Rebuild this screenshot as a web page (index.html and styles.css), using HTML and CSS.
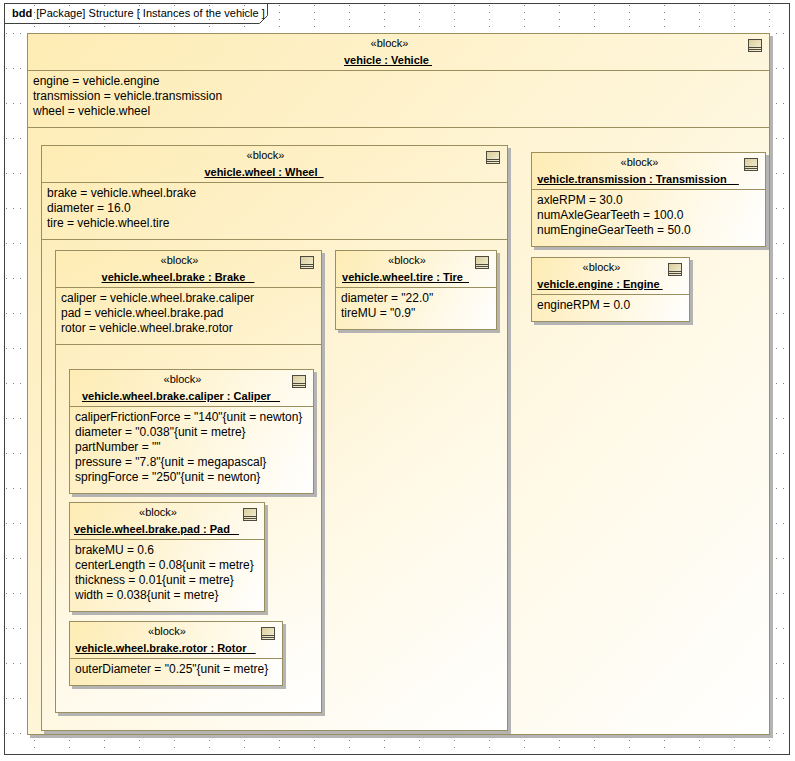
FILE: index.html
```html
<!DOCTYPE html>
<html lang="en">
<head>
<meta charset="utf-8">
<title>bdd Structure</title>
<link rel="stylesheet" href="styles.css">
</head>
<body>
<main class="canvas">
  <svg class="grid" width="795" height="761" aria-hidden="true">
    <defs>
      <pattern id="dots" width="35" height="35" patternUnits="userSpaceOnUse" x="6" y="5">
        <rect x="0" y="28" width="1" height="1"/><rect x="7" y="28" width="1" height="1"/><rect x="14" y="28" width="1" height="1"/><rect x="21" y="28" width="1" height="1"/><rect x="28" y="0" width="1" height="1"/><rect x="28" y="7" width="1" height="1"/><rect x="28" y="14" width="1" height="1"/><rect x="28" y="21" width="1" height="1"/><rect x="28" y="28" width="1" height="1"/>
      </pattern>
    </defs>
    <rect class="grid-fill" x="5" y="4" width="784" height="750"/>
  </svg>
  <div class="frame"></div>
  <svg class="tab-line" width="270" height="24" aria-hidden="true"><path d="M4.5 23.5H259.5L267.5 15.5V3"/></svg>
  <div class="tab"><b>bdd</b><span class="tab-name">[Package] Structure [ Instances of the vehicle ]</span></div>

  <section class="block vehicle">
    <header class="head"><div class="stereo">«block»</div><div class="name">vehicle : Vehicle&nbsp;</div><svg class="icon" width="14" height="13"><use href="#blk"/></svg></header>
    <div class="attrs tall"><div>engine = vehicle.engine</div><div>transmission = vehicle.transmission</div><div>wheel = vehicle.wheel</div></div>

    <section class="block wheel">
      <header class="head"><div class="stereo">«block»</div><div class="name">vehicle.wheel : Wheel&nbsp;&nbsp;</div><svg class="icon" width="14" height="13"><use href="#blk"/></svg></header>
      <div class="attrs tall"><div>brake = vehicle.wheel.brake</div><div>diameter = 16.0</div><div>tire = vehicle.wheel.tire</div></div>

      <section class="block brake">
        <header class="head"><div class="stereo">«block»</div><div class="name">vehicle.wheel.brake : Brake&nbsp;&nbsp;&nbsp;</div><svg class="icon" width="14" height="13"><use href="#blk"/></svg></header>
        <div class="attrs tall"><div>caliper = vehicle.wheel.brake.caliper</div><div>pad = vehicle.wheel.brake.pad</div><div>rotor = vehicle.wheel.brake.rotor</div></div>

        <section class="block caliper">
          <header class="head"><div class="stereo">«block»</div><div class="name">vehicle.wheel.brake.caliper : Caliper&nbsp;&nbsp;&nbsp;</div><svg class="icon" width="14" height="13"><use href="#blk"/></svg></header>
          <div class="attrs"><div>caliperFrictionForce = "140"{unit = newton}</div><div>diameter = "0.038"{unit = metre}</div><div>partNumber = ""</div><div>pressure = "7.8"{unit = megapascal}</div><div>springForce = "250"{unit = newton}</div></div>
        </section>

        <section class="block pad">
          <header class="head"><div class="stereo">«block»</div><div class="name">vehicle.wheel.brake.pad : Pad&nbsp;&nbsp;&nbsp;</div><svg class="icon" width="14" height="13"><use href="#blk"/></svg></header>
          <div class="attrs"><div>brakeMU = 0.6</div><div>centerLength = 0.08{unit = metre}</div><div>thickness = 0.01{unit = metre}</div><div>width = 0.038{unit = metre}</div></div>
        </section>

        <section class="block rotor">
          <header class="head"><div class="stereo">«block»</div><div class="name">vehicle.wheel.brake.rotor : Rotor&nbsp;&nbsp;&nbsp;</div><svg class="icon" width="14" height="13"><use href="#blk"/></svg></header>
          <div class="attrs"><div>outerDiameter = "0.25"{unit = metre}</div></div>
        </section>
      </section>

      <section class="block tire">
        <header class="head"><div class="stereo">«block»</div><div class="name">vehicle.wheel.tire : Tire&nbsp;&nbsp;</div><svg class="icon" width="14" height="13"><use href="#blk"/></svg></header>
        <div class="attrs"><div>diameter = "22.0"</div><div>tireMU = "0.9"</div></div>
      </section>
    </section>

    <section class="block transmission">
      <header class="head"><div class="stereo">«block»</div><div class="name">vehicle.transmission : Transmission&nbsp;&nbsp;&nbsp;&nbsp;</div><svg class="icon" width="14" height="13"><use href="#blk"/></svg></header>
      <div class="attrs"><div>axleRPM = 30.0</div><div>numAxleGearTeeth = 100.0</div><div>numEngineGearTeeth = 50.0</div></div>
    </section>

    <section class="block engine">
      <header class="head"><div class="stereo">«block»</div><div class="name">vehicle.engine : Engine&nbsp;</div><svg class="icon" width="14" height="13"><use href="#blk"/></svg></header>
      <div class="attrs"><div>engineRPM = 0.0</div></div>
    </section>
  </section>

  <svg class="defs" width="0" height="0" aria-hidden="true">
    <defs>
      <linearGradient id="ig" x1="0" y1="0" x2="1" y2="1"><stop offset="0" stop-color="#d9cc97"/><stop offset="1" stop-color="#f6f1dc"/></linearGradient>
      <g id="blk"><rect x="0.5" y="0.5" width="13" height="12" fill="url(#ig)" stroke="#4d4a3f"/><path d="M1 8.5H13M1 10.5H13" stroke="#4d4a3f" fill="none"/></g>
    </defs>
  </svg>
</main>
</body>
</html>
```
FILE: styles.css
```css
* { box-sizing: border-box; }
html, body { margin: 0; padding: 0; background: #fff; }
body { font-family: "Liberation Sans", Arial, sans-serif; font-size: 12px; color: #000; }

.canvas { position: relative; width: 795px; height: 761px; overflow: hidden; }
.grid { position: absolute; left: 0; top: 0; }
.grid-fill { fill: url(#dots); }
#dots rect { fill: #7f7f7f; }
.frame { position: absolute; left: 4px; top: 3px; width: 786px; height: 752px; border: 1px solid #404040; }
.tab-line { position: absolute; left: 0; top: 0; fill: none; stroke: #404040; }
.tab { position: absolute; left: 12px; top: 6px; line-height: 15px; white-space: pre; display: flex; gap: 4px; }
.tab b { font-weight: 700; font-size: 11px; }
.tab-name { font-size: 11px; letter-spacing: 0.04px; }
.defs { position: absolute; }

.block {
  position: absolute;
  border: 1px solid #9c8f5f;
  box-shadow: 3px 3px 0 #b4b4b4;
  background: linear-gradient(var(--angle), #feecb4 0%, #ffffff 100%);
}
.head {
  position: relative;
  height: 37px;
  padding: 2px 18px 0 0;
  border-bottom: 1px solid #9c8f5f;
  text-align: center;
  white-space: nowrap;
}
.stereo { font-size: 11px; line-height: 15px; }
.name { font-weight: 700; font-size: 11px; line-height: 19px; padding-right: 3px; text-decoration: underline; }
.icon { position: absolute; top: 5px; right: 7px; display: block; }
.attrs { padding: 3px 5px 0; line-height: 15px; white-space: nowrap; }
.tall { height: 57px; border-bottom: 1px solid #9c8f5f; }

.vehicle { --angle: 133.4deg; left: 27px; top: 33px; width: 743px; height: 702px; }
.wheel { --angle: 141.5deg; left: 13px; top: 111px; width: 467px; height: 586px; }
.brake { --angle: 150deg; left: 13px; top: 104px; width: 267px; height: 463px; }
.caliper { --angle: 117deg; left: 13px; top: 118px; width: 245px; height: 125px; }
.pad { --angle: 119.3deg; left: 13px; top: 251px; width: 196px; height: 110px; }
.rotor { --angle: 106.9deg; left: 13px; top: 370px; width: 214px; height: 65px; }
.tire { --angle: 116.3deg; left: 293px; top: 104px; width: 162px; height: 80px; }
.transmission { --angle: 112deg; left: 503px; top: 118px; width: 235px; height: 95px; }
.engine { --angle: 112.2deg; left: 503px; top: 223px; width: 159px; height: 65px; }
```
